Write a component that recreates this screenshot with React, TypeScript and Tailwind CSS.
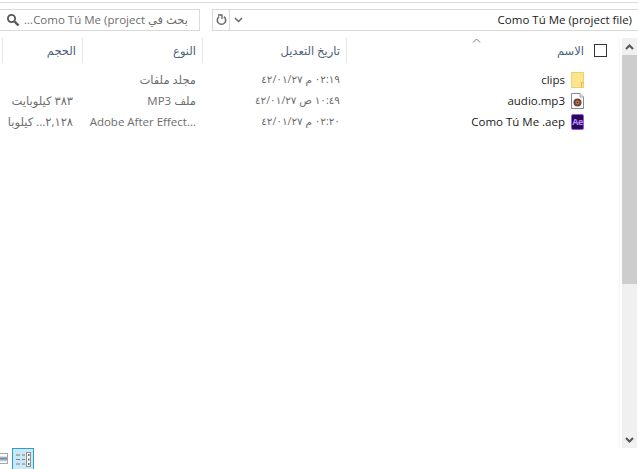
function Row({ size, type, date, name, icon }: { size: string; type: string; date: string; name: string; icon: React.ReactNode }) {
  return (
    <div className="grid grid-cols-[82px_120px_144px_274px] h-[21px] items-center text-[11.5px] leading-[21px] text-[#6d6d6d]">
      <div dir="rtl" className="pr-[9px] whitespace-nowrap overflow-hidden">{size}</div>
      <div dir="rtl" className="pr-[6px] whitespace-nowrap overflow-hidden">{type}</div>
      <div dir="rtl" className="pr-[6px] whitespace-nowrap overflow-hidden text-[10.5px]">{date}</div>
      <div className="flex items-center justify-end pr-[36px] gap-[6px] text-[#1a1a1a]">
        <span>{name}</span>
        {icon}
      </div>
    </div>
  );
}

function Folder() {
  return (
    <svg width="13" height="16" viewBox="0 0 13 16">
      <rect x="0.5" y="0.5" width="12" height="15" fill="#fde58f" stroke="#f2cf6a" />
      <path d="M10.5 15.5V10.5H12.5" fill="none" stroke="#e6b949" />
    </svg>
  );
}

function Mp3() {
  return (
    <svg width="13" height="16" viewBox="0 0 13 16">
      <path d="M0.5 0.5H9L12.5 4V15.5H0.5Z" fill="#fff" stroke="#8a8a8a" />
      <path d="M9 0.5V4H12.5" fill="#ddd" stroke="#a8a8a8" />
      <circle cx="6.5" cy="9.5" r="4" fill="#5f4a48" />
      <circle cx="6.5" cy="9.5" r="2" fill="#e2703a" />
      <circle cx="6.5" cy="9.5" r="0.8" fill="#222" />
    </svg>
  );
}

function Ae() {
  return (
    <div className="w-[13px] h-[16px] rounded-[2px] bg-[#2a0a55] border border-[#9b59e0] flex items-center justify-center text-[9px] font-bold leading-none tracking-[-0.5px] text-[#b98cff]">
      Ae
    </div>
  );
}

function Divider() {
  return <div className="w-px h-[25px] bg-[#e5e5e5]" />;
}

export default function App() {
  return (
    <div className="w-[638px] h-[469px] bg-white overflow-hidden flex flex-col font-['Open_Sans','Noto_Sans','DejaVu_Sans',sans-serif]">
      <div className="h-[1px] mt-[2px] bg-[#dcdcdc] shrink-0" />
      <div className="flex h-[22px] mt-[6px] shrink-0 justify-between">
        <div className="w-[200px] border border-l-0 border-[#d9d9d9] flex items-center justify-between pl-[6px] pr-[11px] text-[11.5px] text-[#6d6d6d]">
          <svg width="14" height="14" viewBox="0 0 14 14" fill="none">
            <circle cx="5.5" cy="5.5" r="3.6" stroke="#555" strokeWidth="1.8" />
            <path d="M8.5 8.5L12.5 12.5" stroke="#555" strokeWidth="2.4" />
          </svg>
          <span dir="rtl" className="whitespace-nowrap">بحث في Como Tú Me (project...</span>
        </div>
        <div className="w-[426px] border border-r-0 border-[#d9d9d9] flex items-center text-[11.5px] text-[#1a1a1a]">
          <div className="w-[17px] h-full border-r border-[#d9d9d9] flex items-center justify-center">
            <svg width="11" height="12" viewBox="0 0 11 12" fill="none">
              <path d="M3.2 2.6A4.2 4.2 0 1 0 7.8 2.6" stroke="#666" strokeWidth="1.5" />
              <path d="M2 1H6V5" stroke="#666" strokeWidth="1.3" />
            </svg>
          </div>
          <div className="w-[17px] flex items-center justify-center">
            <svg width="9" height="6" viewBox="0 0 9 6" fill="none">
              <path d="M1 1L4.5 4.5L8 1" stroke="#666" strokeWidth="1.5" />
            </svg>
          </div>
          <div className="flex-1 text-right pr-[6px] whitespace-nowrap">Como Tú Me (project file)</div>
        </div>
      </div>

      <div className="flex mt-[7px] h-[410px] shrink-0">
        <div className="w-[620px] shrink-0 border-r border-[#f2f2f2] relative">
          <div className="flex h-[25px] pl-[2px] text-[11.5px] text-[#4c607a]">
            <Divider />
            <div dir="rtl" className="w-[79px] pr-[6px] leading-[25px]">الحجم</div>
            <Divider />
            <div dir="rtl" className="w-[119px] pr-[6px] leading-[25px]">النوع</div>
            <Divider />
            <div dir="rtl" className="w-[143px] pr-[6px] leading-[25px]">تاريخ التعديل</div>
            <Divider />
            <div className="flex-1 flex items-center justify-end pr-[12px] gap-[10px]">
              <span dir="rtl">الاسم</span>
              <div className="w-[13px] h-[13px] border border-[#333]" />
            </div>
          </div>
          <svg className="absolute left-[472px] top-0" width="9" height="6" viewBox="0 0 9 6" fill="none">
            <path d="M1 4.5L4.5 1L8 4.5" stroke="#777" strokeWidth="1" />
          </svg>
          <div className="mt-[6px]">
            <Row size="" type="مجلد ملفات" date="٠٢:١٩ م ٤٢/٠١/٢٧" name="clips" icon={<Folder />} />
            <Row size="٣٨٣ كيلوبايت" type="ملف MP3" date="١٠:٤٩ ص ٤٢/٠١/٢٧" name="audio.mp3" icon={<Mp3 />} />
            <Row size="٢,١٢٨... كيلوبا" type="...Adobe After Effect" date="٠٢:٢٠ م ٤٢/٠١/٢٧" name="Como Tú Me .aep" icon={<Ae />} />
          </div>
        </div>
        <div className="w-[15px] ml-[2px] shrink-0 bg-[#f0f0f0] flex flex-col">
          <div className="h-[17px] bg-[#f0f0f0] flex items-center justify-center">
            <svg width="9" height="6" viewBox="0 0 9 6" fill="none">
              <path d="M1 5L4.5 1.5L8 5" stroke="#555" strokeWidth="2" />
            </svg>
          </div>
          <div className="h-[229px] bg-[#cdcdcd]" />
          <div className="flex-1" />
          <div className="h-[17px] flex items-center justify-center">
            <svg width="9" height="6" viewBox="0 0 9 6" fill="none">
              <path d="M1 1L4.5 4.5L8 1" stroke="#555" strokeWidth="2" />
            </svg>
          </div>
        </div>
      </div>

      <div className="flex items-start h-[21px] shrink-0">
        <div className="w-[8px] h-[11px] mt-[5px] border border-l-0 border-[#a8a8a8] bg-[linear-gradient(#fff_20%,#6a8aa0_50%,#ffffff_90%)]" />
        <div className="w-[22px] h-[22px] ml-[4px] border border-[#26a0da] bg-[#cbe8f6] flex items-center justify-center">
          <svg width="16" height="15" viewBox="0 0 16 15">
            <path d="M1 3H5M7 3H10M1 7.5H5M7 7.5H10M1 12H5M7 12H10" stroke="#7f7f7f" strokeWidth="1" fill="none" />
            <rect x="11.5" y="0.5" width="4" height="14" fill="#fff" stroke="#8f8f8f" />
            <rect x="13" y="2" width="1.5" height="2" fill="#666" />
            <rect x="13" y="6.5" width="1.5" height="2" fill="#666" />
            <rect x="13" y="11" width="1.5" height="2" fill="#666" />
          </svg>
        </div>
      </div>
    </div>
  );
}
